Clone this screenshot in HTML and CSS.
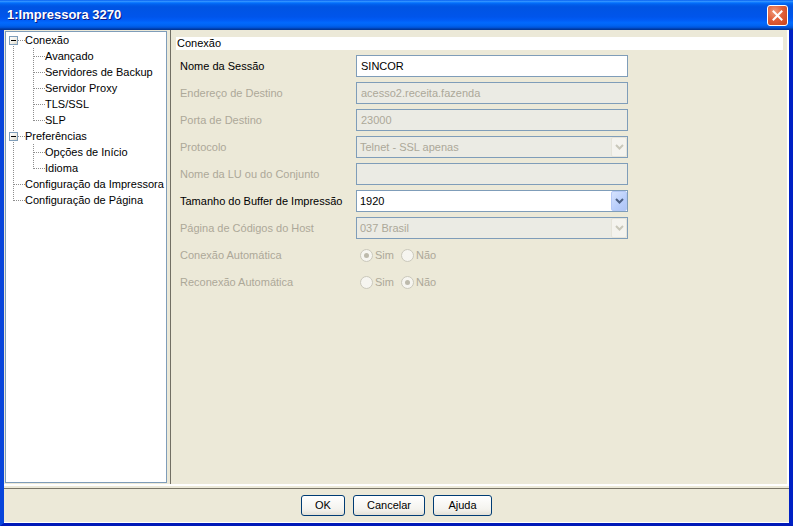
FILE: index.html
```html
<!DOCTYPE html>
<html>
<head>
<meta charset="utf-8">
<title>1:Impressora 3270</title>
<link rel="stylesheet" href="styles.css">
</head>
<body>
<div class="window">
  <div class="titlebar">
    <span class="title">1:Impressora 3270</span>
    <span class="close"><svg width="11" height="11" viewBox="0 0 11 11"><path d="M1.5 1.5 L9.5 9.5 M9.5 1.5 L1.5 9.5" stroke="#fff" stroke-width="2" stroke-linecap="square"/></svg></span>
  </div>
  <div class="client">
    <div class="split">
      <div class="tree">
        <div class="row"><span class="cell first"><span class="box"></span></span><span class="label">Conexão</span></div>
        <div class="row"><span class="cell pipe"></span><span class="cell tee"></span><span class="label">Avançado</span></div>
        <div class="row"><span class="cell pipe"></span><span class="cell tee"></span><span class="label">Servidores de Backup</span></div>
        <div class="row"><span class="cell pipe"></span><span class="cell tee"></span><span class="label">Servidor Proxy</span></div>
        <div class="row"><span class="cell pipe"></span><span class="cell tee"></span><span class="label">TLS/SSL</span></div>
        <div class="row"><span class="cell pipe"></span><span class="cell ell"></span><span class="label">SLP</span></div>
        <div class="row"><span class="cell tee"><span class="box"></span></span><span class="label">Preferências</span></div>
        <div class="row"><span class="cell pipe"></span><span class="cell tee"></span><span class="label">Opções de Início</span></div>
        <div class="row"><span class="cell pipe"></span><span class="cell ell"></span><span class="label">Idioma</span></div>
        <div class="row"><span class="cell tee"></span><span class="label">Configuração da Impressora</span></div>
        <div class="row"><span class="cell ell"></span><span class="label">Configuração de Página</span></div>
      </div>
      <div class="rpanel">
        <div class="header">Conexão</div>
        <div class="form">
          <div class="lbl">Nome da Sessão</div>
          <div class="field"><span class="val">SINCOR</span></div>

          <div class="lbl dis">Endereço de Destino</div>
          <div class="field dis"><span class="val">acesso2.receita.fazenda</span></div>

          <div class="lbl dis">Porta de Destino</div>
          <div class="field dis"><span class="val">23000</span></div>

          <div class="lbl dis">Protocolo</div>
          <div class="field combo dis"><span class="val">Telnet - SSL apenas</span><span class="cbtn"><svg width="9" height="6" viewBox="0 0 9 6"><path d="M1 1 L4.5 4.5 L8 1" fill="none" stroke="#C9C7BA" stroke-width="2"/></svg></span></div>

          <div class="lbl dis">Nome da LU ou do Conjunto</div>
          <div class="field dis"><span class="val"></span></div>

          <div class="lbl">Tamanho do Buffer de Impressão</div>
          <div class="field combo"><span class="val">1920</span><span class="cbtn"><svg width="9" height="6" viewBox="0 0 9 6"><path d="M1 1 L4.5 4.5 L8 1" fill="none" stroke="#4D6185" stroke-width="2"/></svg></span></div>

          <div class="lbl dis">Página de Códigos do Host</div>
          <div class="field combo dis"><span class="val">037 Brasil</span><span class="cbtn"><svg width="9" height="6" viewBox="0 0 9 6"><path d="M1 1 L4.5 4.5 L8 1" fill="none" stroke="#C9C7BA" stroke-width="2"/></svg></span></div>

          <div class="lbl dis">Conexão Automática</div>
          <div class="radios"><span class="opt"><span class="radio on"></span><span>Sim</span></span><span class="opt"><span class="radio"></span><span>Não</span></span></div>

          <div class="lbl dis">Reconexão Automática</div>
          <div class="radios"><span class="opt"><span class="radio"></span><span>Sim</span></span><span class="opt"><span class="radio on"></span><span>Não</span></span></div>
        </div>
      </div>
    </div>
    <div class="sep"></div>
    <div class="buttons">
      <span class="btn w-ok">OK</span>
      <span class="btn w-cancel">Cancelar</span>
      <span class="btn w-help">Ajuda</span>
    </div>
  </div>
</div>
</body>
</html>
```

FILE: styles.css
```css
* { box-sizing: border-box; }
html, body { margin: 0; padding: 0; }
body {
  width: 793px;
  height: 526px;
  overflow: hidden;
  font-family: "Liberation Sans", Arial, sans-serif;
  font-size: 11px;
  color: #000;
  background: #0831D9;
}
.window { display: flex; flex-direction: column; height: 526px; }

.titlebar {
  height: 30px;
  flex: none;
  display: flex;
  justify-content: space-between;
  align-items: flex-start;
  padding: 0 5px 0 7px;
  background: linear-gradient(to bottom,
    #0058EE 0%, #3593FF 4%, #288EFF 6%, #127DFF 8%, #036FFC 10%,
    #0262EE 14%, #0057E5 20%, #0054E3 24%, #0055EB 56%, #005BF5 66%,
    #026AFE 76%, #0062EF 86%, #0052D6 92%, #0040AB 96%, #003092 100%);
}
.title {
  margin-top: 7px;
  color: #fff;
  font-weight: bold;
  font-size: 13px;
  line-height: 16px;
  text-shadow: 1px 1px 0 #0A1883;
}
.close {
  margin-top: 5px;
  width: 21px;
  height: 21px;
  border: 1px solid #fff;
  border-radius: 3px;
  background: radial-gradient(circle at 35% 30%, #F09B7A 0%, #E0603A 45%, #C94218 100%);
  display: flex;
  align-items: center;
  justify-content: center;
}

.client {
  flex: 1;
  display: flex;
  flex-direction: column;
  background: #ECE9D8;
  border-left: 4px solid #0845DB;
  border-right: 4px solid #0020C4;
  border-bottom: 3px solid #0019B8;
}

.split {
  height: 456px;
  flex: none;
  display: flex;
  border-bottom: 2px solid #fff;
}

.tree {
  --v: repeating-linear-gradient(to bottom, #8E8E8E 0 1px, transparent 1px 2px);
  --h: repeating-linear-gradient(to right, #8E8E8E 0 1px, transparent 1px 2px);
  width: 162px;
  height: 452px;
  margin: 1px 3px 0 1px;
  background: #fff;
  border: 1px solid #7F9DB9;
  flex: none;
}
.row { display: flex; height: 16px; }
.cell { display: block; width: 19px; height: 16px; flex: none; }
.pipe { width: 20px; background: var(--v) 7px 0 / 1px 16px no-repeat; }
.tee { background: var(--v) 7px 0 / 1px 16px no-repeat, var(--h) 8px 8px / 11px 1px no-repeat; }
.ell { background: var(--v) 7px 0 / 1px 9px no-repeat, var(--h) 8px 8px / 11px 1px no-repeat; }
.first { background: var(--v) 7px 8px / 1px 8px no-repeat, var(--h) 8px 8px / 11px 1px no-repeat; }
.box {
  display: flex;
  align-items: center;
  justify-content: center;
  width: 9px;
  height: 9px;
  margin: 4px 0 0 3px;
  border: 1px solid #7F9DB9;
  background: linear-gradient(135deg, #fff 0%, #F0EEE6 60%, #D8D4C6 100%);
}
.box::before { content: ""; width: 5px; height: 1px; background: #000; }
.label { line-height: 16px; white-space: nowrap; }

.rpanel {
  flex: 1;
  border-left: 1px solid #716F64;
  border-right: 2px solid #fff;
  padding: 7px 4px 0 5px;
}
.header {
  height: 13px;
  line-height: 13px;
  background: #fff;
  padding-left: 1px;
}
.form {
  margin-top: 5px;
  padding-left: 4px;
  display: grid;
  grid-template-columns: 176px 272px;
  grid-auto-rows: 22px;
  row-gap: 5px;
}
.lbl { line-height: 22px; white-space: nowrap; }
.lbl.dis { color: #ACA899; }
.field {
  display: flex;
  height: 22px;
  border: 1px solid #7F9DB9;
  background: #fff;
}
.field.dis { background: #EBEBE4; color: #ACA899; }
.val { flex: 1; line-height: 20px; padding-left: 4px; white-space: nowrap; }
.combo .val { padding-left: 3px; }
.cbtn {
  width: 16px;
  height: 20px;
  display: flex;
  align-items: center;
  justify-content: center;
  border: 1px solid #B4C8F6;
  border-radius: 2px;
  background: linear-gradient(135deg, #D6E3FD 0%, #B9CEFB 60%, #AFC5F5 100%);
}
.dis .cbtn {
  border: 1px solid #E6E4DA;
  background: #F4F3EE;
}

.radios { display: flex; align-items: center; padding-left: 4px; color: #ACA899; }
.opt { display: flex; align-items: center; width: 41px; gap: 2px; }
.radio {
  width: 13px;
  height: 13px;
  border-radius: 50%;
  border: 1px solid #CAC8BB;
  background: #F6F5F0;
  display: flex;
  align-items: center;
  justify-content: center;
}
.radio.on::before {
  content: "";
  width: 5px;
  height: 5px;
  border-radius: 50%;
  background: #BDBAAC;
}

.sep { height: 3px; flex: none; border-bottom: 1px solid #7A7668; }
.buttons {
  height: 34px;
  flex: none;
  display: flex;
  justify-content: center;
  gap: 8px;
  padding-top: 6px;
  border-bottom: 1px solid #fff;
}
.btn {
  height: 21px;
  border: 1px solid #003C74;
  border-radius: 3px;
  background: linear-gradient(to bottom, #FFFFFF 0%, #F4F3EE 70%, #E3E0D6 100%);
  display: flex;
  align-items: center;
  justify-content: center;
  line-height: 19px;
}
.w-ok { width: 44px; }
.w-cancel { width: 72px; }
.w-help { width: 59px; }
```
